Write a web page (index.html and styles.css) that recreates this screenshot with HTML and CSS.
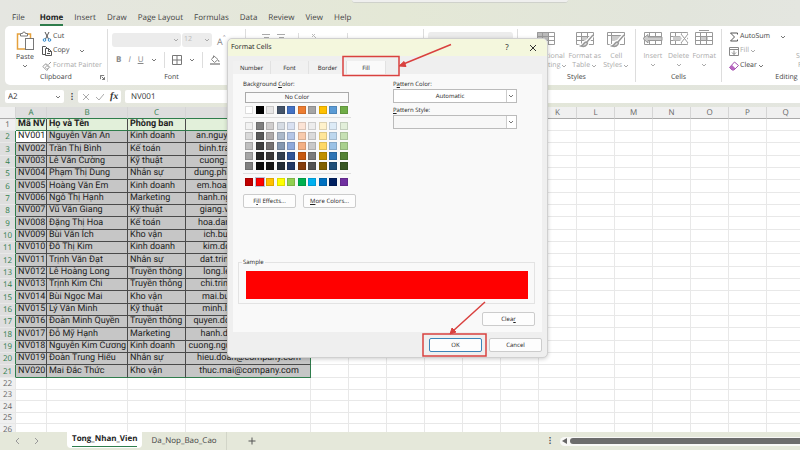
FILE: index.html
```html
<!DOCTYPE html>
<html lang="vi">
<head>
<meta charset="utf-8">
<meta name="viewport" content="width=device-width, initial-scale=1">
<title>Format Cells</title>
<link rel="stylesheet" href="styles.css">
</head>
<body>
<svg class="defs" aria-hidden="true">
  <symbol id="chev" viewBox="0 0 6 6"><path d="M1 2l2 2 2-2" fill="none" stroke="currentColor"/></symbol>
  <symbol id="grid" viewBox="0 0 20 18"><path d="M1.500 2.500h17v12h-17zM1.500 6.500h17M1.500 10.500h17M6.500 2.500v12M12.500 2.500v12" fill="none" stroke="currentColor"/></symbol>
  <symbol id="brush" viewBox="0 0 20 18"><path d="M17.500 5.500l-6 7M11 12c-2 0-2 3-5 4 3 1 6 0 6.500-3z" fill="#e3e3e3" stroke="#fff" stroke-width="4"/><path d="M18 5l-6 7M11 12c-2 0-2 3-5 4 3 1 6 0 6.500-3z" fill="#ddd" stroke="currentColor" stroke-width="1.500"/></symbol>
</svg>
<div class="app">
  <header class="top">
    <div class="search"></div>
    <nav class="tabs">
      <a href="#">File</a><a href="#" class="active">Home</a><a href="#">Insert</a><a href="#">Draw</a><a href="#">Page Layout</a><a href="#">Formulas</a><a href="#">Data</a><a href="#">Review</a><a href="#">View</a><a href="#">Help</a>
    </nav>
  </header>

  <section class="ribbon">
    <div class="group clipboard">
      <div class="body">
        <button class="big">
          <svg class="i-paste" viewBox="0 0 18 20"><path d="M4 3H1.500v15H9M11 3h3.500v4" fill="none" stroke="#e5a13c" stroke-width="1.500"/><path d="M4.500 5V2.500H6.500a1.500 1.500 0 0 1 3 0H11.500V5z" fill="#fff" stroke="#777"/><rect x="9.500" y="7.500" width="8" height="11" fill="#fff" stroke="#777"/></svg>
          Paste<svg class="chev"><use href="#chev"/></svg>
        </button>
        <div class="stack">
          <button><svg class="i10" viewBox="0 0 10 10"><path d="M3 0l3.500 7M7 0L3.500 7" fill="none" stroke="#555"/><circle cx="2.500" cy="8" r="1.300" fill="none" stroke="#2c86c9"/><circle cx="7.500" cy="8" r="1.300" fill="none" stroke="#2c86c9"/></svg>Cut</button>
          <button><svg class="i10" viewBox="0 0 10 10"><path d="M3 8.500H.5v-8h3l1.500 1.500M3.500 2.500h3l3 3v4h-6zM6.500 2.500v3h3M5 7.500h3" fill="none" stroke="#555"/></svg>Copy<svg class="chev far"><use href="#chev"/></svg></button>
          <button class="off"><svg class="i10" viewBox="0 0 10 10"><path d="M9 1L6.500 3.500M4 2.500l4 4M3.500 3L.8 5.500l4 4L7 6.500zM3 6.500l1.500-1M4.500 8l1-1" fill="none" stroke="#999"/></svg>Format Painter</button>
        </div>
      </div>
      <div class="label">Clipboard<svg class="launch" viewBox="0 0 6 6"><path d="M.5 5V.5H5M2 2l3 3M5.500 2.500v3h-3" fill="none" stroke="#555"/></svg></div>
    </div>
    <div class="group font">
      <div class="body col">
        <div class="line"><select class="fname" aria-label="Font name"><option></option></select><select class="fsize" aria-label="Font size"><option>12</option></select><span class="aa">A<sup>ˆ</sup></span></div>
        <div class="line tools"><button><b>B</b></button><button><i>I</i></button><button><u>U</u></button><svg class="chev"><use href="#chev"/></svg><span class="sep"></span>
          <svg class="i10" viewBox="0 0 10 10"><path d="M.5.5h9v9h-9zM.5 5h9M5 .5v9" fill="none" stroke="#777"/></svg><svg class="chev"><use href="#chev"/></svg><span class="sep"></span>
          <svg class="i10" viewBox="0 0 10 10"><path d="M4 1l4 3.500-3.500 3L1.500 4.500zM3.500 3V.5M8.500 5l.5 2" fill="none" stroke="#888"/><path d="M0 9h10" stroke="#aaa" stroke-width="2"/></svg><svg class="chev"><use href="#chev"/></svg><button><u>A</u></button></div>
      </div>
      <div class="label">Font</div>
    </div>
    <div class="group align"><div class="body"><svg class="i-lines" viewBox="0 0 24 10"><path d="M0 1.500h8M2 4.500h5M15 1.500h8M17 4.500h5" stroke="#aaa" fill="none"/></svg><span class="sep"></span><svg class="i-lines" viewBox="0 0 24 10"><path d="M1 1l7 7M1 4l3-3" stroke="#bbb" fill="none"/></svg><span class="sep"></span></div></div>
    <div class="group number"><div class="body"><select class="general" aria-label="Number format"><option></option></select></div></div>
    <div class="group styles">
      <div class="body">
        <button class="big off"><svg class="i20" viewBox="0 0 20 18"><path d="M1 2h12v8H1z" fill="#bbb"/><use href="#grid"/></svg>Conditional<span>Formatting<svg class="chev"><use href="#chev"/></svg></span></button>
        <button class="big off"><svg class="i20" viewBox="0 0 20 18"><path d="M6 6h7v5H6z" fill="#ccc"/><use href="#grid"/><use href="#brush"/></svg>Format as<span>Table<svg class="chev"><use href="#chev"/></svg></span></button>
        <button class="big off"><svg class="i20" viewBox="0 0 20 18"><path d="M1.500 2.500h17v12h-17zM1.500 5.500h17M5.500 2.500v12" fill="none" stroke="currentColor"/><path d="M6 6h9v5H6z" fill="#ccc"/><use href="#brush"/></svg>Cell<span>Styles<svg class="chev"><use href="#chev"/></svg></span></button>
      </div>
      <div class="label">Styles</div>
    </div>
    <div class="group cells">
      <div class="body">
        <button class="big off"><svg class="i20" viewBox="0 0 20 18"><use href="#grid"/><path d="M0 8.500l5-4v2.500h14v3.500H5v2.500z" fill="#ccc" stroke="currentColor"/></svg>Insert<svg class="chev"><use href="#chev"/></svg></button>
        <button class="big off"><svg class="i20" viewBox="0 0 20 18"><use href="#grid"/><path d="M4 6.500h9v4H4z" fill="#ccc"/><path d="M12 4l7 9M19 4l-7 9" stroke="#fff" stroke-width="4"/><path d="M12 4l7 9M19 4l-7 9" stroke="currentColor"/></svg>Delete<svg class="chev"><use href="#chev"/></svg></button>
        <button class="big off"><svg class="i20" viewBox="0 0 20 18"><path d="M6 6h8v5H6z" fill="#ccc"/><use href="#grid"/><path d="M5 .5h10" stroke="currentColor"/></svg>Format<svg class="chev"><use href="#chev"/></svg></button>
      </div>
      <div class="label">Cells</div>
    </div>
    <div class="group editing">
      <div class="body">
        <div class="stack">
          <button><svg class="i10" viewBox="0 0 10 10"><path d="M8.500 2.500V1H1.500L5.500 5 1.500 9h7V7.500" fill="none" stroke="#555"/></svg>AutoSum<svg class="chev far"><use href="#chev"/></svg></button>
          <button class="off"><svg class="i10" viewBox="0 0 10 10"><path d="M.5 1.500h9v8h-9zM.5 3.500h9M5 4.500v4M3 6.500l2 2 2-2" fill="none" stroke="#888"/></svg>Fill<svg class="chev"><use href="#chev"/></svg></button>
          <button><svg class="i10" viewBox="0 0 10 10"><path d="M5.500 1L9.500 4.500 5 9H3L.5 6.500z" fill="#fff" stroke="#a44fae"/><path d="M3 4l3.500 3.500L5 9H3L.5 6.500z" fill="#b765c0"/></svg>Clear<svg class="chev"><use href="#chev"/></svg></button>
        </div>
        <button class="big off sort"><span class="az">A<br>Z</span>Sort &amp;<span>Filter</span></button>
      </div>
      <div class="label">Editing</div>
    </div>
  </section>

  <section class="formula">
    <label class="namebox"><input value="A2" aria-label="Name box"><svg class="chev"><use href="#chev"/></svg></label>
    <span class="dots">⋮</span>
    <div class="fx"><svg viewBox="0 0 22 8"><path d="M1 1l6 6M7 1L1 7M14 4l3 3 5-6" fill="none" stroke="#aaa"/></svg><i>fx</i></div>
    <input class="value" value="NV001" aria-label="Formula bar">
  </section>

  <main class="sheet"><table id="sheet"></table></main>

  <footer class="bottom">
    <span class="nav"><svg viewBox="0 0 24 8"><path d="M4 1L1 4l3 3M20 1l3 3-3 3" fill="none" stroke="#999"/></svg></span>
    <a href="#" class="st active"><span>Tong_Nhan_Vien</span></a><a href="#" class="st">Da_Nop_Bao_Cao</a>
    <button class="add" aria-label="New sheet"><svg viewBox="0 0 8 8"><path d="M4 .5v7M.5 4h7" stroke="#555"/></svg></button>
    <span class="more">⋮</span>
    <div class="scroll"><svg viewBox="0 0 5 6"><path d="M5 0v6L0 3z" fill="#666"/></svg><div class="thumb"></div></div>
  </footer>

  <div class="dialog" role="dialog" aria-label="Format Cells">
    <div class="title"><span>Format Cells</span><button>?</button><button aria-label="Close"><svg viewBox="0 0 6 6"><path d="M0 0l6 6M6 0L0 6" stroke="#333"/></svg></button></div>
    <div class="dtabs"><button>Number</button><button>Font</button><button>Border</button><button class="on">Fill</button></div>
    <div class="panel">
      <div class="cols">
        <div class="left">
          <div class="lbl">Background <u>C</u>olor:</div>
          <button class="nocolor">No Color</button>
          <div id="palette"></div>
          <div class="pair"><button class="btn">F<u>i</u>ll Effects...</button><button class="btn"><u>M</u>ore Colors...</button></div>
        </div>
        <div class="right">
          <label class="lbl" for="pc">P<u>a</u>ttern Color:</label>
          <div class="combo"><select id="pc"><option>Automatic</option></select><span><svg class="chev"><use href="#chev"/></svg></span></div>
          <label class="lbl" for="ps"><u>P</u>attern Style:</label>
          <div class="combo empty"><select id="ps"><option></option></select><span><svg class="chev"><use href="#chev"/></svg></span></div>
        </div>
      </div>
      <fieldset><legend>Sample</legend><div class="red"></div></fieldset>
      <button class="btn clear">Clea<u>r</u></button>
    </div>
    <div class="actions"><button class="btn ok">OK</button><button class="btn">Cancel</button></div>
    <svg class="marks" viewBox="0 0 320 320" aria-hidden="true"><g fill="none" stroke="#d9413f" stroke-width="1.500"><path d="M116 18.500h56v19h-56zM196 296h63v22h-63zM224 6.500L174 27M258 264l-32 29"/></g><path d="M172 28l5-4.500 2 5zM223 296l2-6 4 4z" fill="#d9413f" stroke="#d9413f"/></svg>
  </div>
</div>
<script src="app.js"></script>
</body>
</html>
```
FILE: styles.css
```css
* { box-sizing: border-box; }
body { margin: 0; font-family: "Open Sans", "Noto Sans", sans-serif; font-size: 8px; line-height: 10px; color: #444; text-rendering: geometricPrecision; }
button, input, select { font: inherit; color: inherit; text-rendering: inherit; border: 0; background: none; padding: 0; margin: 0; appearance: none; }
a { color: inherit; text-decoration: none; }
svg { display: block; flex: none; }
.defs { position: absolute; width: 0; height: 0; }
.app { position: relative; height: 100vh; display: flex; flex-direction: column; overflow: hidden; background: linear-gradient(90deg, #e5e6e1, #e4e8d6 50%, #e2e5dc 85%, #e4e6e0); }
.chev { width: 6px; height: 6px; color: #777; }

.top { flex: none; height: 26px; }
.search { width: 27%; height: 3px; margin-left: 44%; background: #efefee; border-bottom: 1px solid #cfd1cb; border-radius: 0 0 3px 3px; }
.tabs { display: flex; gap: 11px; padding: 8px 12px 0; line-height: 14px; }
.tabs a:first-child { margin-right: 4px; }
.active { font-weight: 700; color: #222; border-bottom: 2px solid #2f7d4c; }
.tabs .active { line-height: 12px; padding-top: 1px; }

.ribbon { flex: none; display: flex; height: 59px; margin-left: 5px; padding: 3px 0; background: #fff; border-radius: 5px 0 0 5px; overflow: hidden; }
.group { flex: none; display: flex; flex-direction: column; border-right: 1px solid #ddd; font-size: 7px; }
.body { flex: 1; display: flex; min-height: 0; }
.label { position: relative; height: 9px; line-height: 9px; text-align: center; }
.launch { position: absolute; right: 2px; top: 2px; width: 5px; height: 5px; }
.clipboard { width: 103px; }
.font { width: 138px; }
.align { width: 178px; }
.number { width: 94px; }
.styles { width: 118px; }
.cells { width: 86px; }
.editing { width: 130px; }
.big { display: flex; flex-direction: column; align-items: center; line-height: 9px; font-size: 7px; }
.big > span { display: flex; align-items: center; gap: 1px; }
.off { color: #aaa; }
.off .chev { color: #aaa; }
.stack { display: flex; flex-direction: column; padding-top: 1px; }
.stack button { display: flex; align-items: center; gap: 1px; height: 15px; white-space: nowrap; }
.far { margin-left: 9px; }
.i10 { width: 10px; height: 10px; }
.i20 { width: 20px; height: 18px; color: #999; }
.clipboard .big { width: 34px; margin-left: 3px; padding-top: 2px; }
.clipboard .big .chev { margin-top: 1px; }
.i-paste { width: 18px; height: 20px; margin-bottom: 2px; }
.font .body { flex-direction: column; gap: 5px; padding: 4px 0 0 4px; color: #888; }
.font .label { padding-right: 10px; }
.line { display: flex; align-items: center; gap: 1px; height: 14px; }
.fname, .fsize, .general { background: #ececec url("data:image/svg+xml,%3Csvg xmlns='http://www.w3.org/2000/svg' width='6' height='6'%3E%3Cpath d='M1 2l2 2 2-2' fill='none' stroke='%23aaa'/%3E%3C/svg%3E") no-repeat right 2px center; height: 14px; border-radius: 3px; color: #bbb; }
.fname { width: 69px; }
.fsize { width: 30px; padding-left: 2px; }
.aa { margin-left: 4px; font-size: 9px; }
.tools { justify-content: space-between; padding: 0 0 0 4px; font-size: 8px; height: 16px; }
.sep { width: 1px; align-self: stretch; background: #ddd; }
.align .body { gap: 12px; padding: 4px 16px 0; color: #aaa; }
.i-lines { width: 24px; height: 10px; }
.general { width: 86px; margin: 3px 4px; padding-left: 3px; align-self: flex-start; }
.styles .body { padding: 1px 5px 0 7px; }
.styles .big { width: 36px; }
.styles .big:first-child { width: 42px; }
.styles .big:last-child { width: 28px; }
.cells .big { flex: 1; }
.cells .body { padding: 1px 4px 0; }
.cells .big .chev { margin-top: 1px; }
.styles .i20, .cells .i20 { margin-bottom: 4px; }
.editing .body { padding-left: 7px; gap: 10px; }
.az { font-size: 9px; line-height: 9px; margin-bottom: 3px; }
.sort { padding-top: 2px; }

.formula { flex: none; display: flex; gap: 4px; height: 13px; margin: 5px 0 4px 5px; color: #333; }
.namebox { display: flex; align-items: center; width: 59px; background: #fff; border-radius: 2px; padding: 0 3px; }
.namebox input { flex: 1; min-width: 0; }
.dots { width: 6px; text-align: center; line-height: 13px; font-weight: 700; }
.fx { display: flex; align-items: center; gap: 6px; width: 43px; padding-left: 4px; background: #fff; border-radius: 2px; }
.fx svg { width: 22px; height: 8px; }
.fx i { font: italic 700 10px "Liberation Serif", serif; }
.value { flex: 1; background: #fff; padding-left: 6px; border-radius: 2px 0 0 2px; }

.sheet { flex: 1; min-height: 0; overflow: hidden; background: #fff; }
.sheet table { table-layout: fixed; width: 1071px; border-collapse: separate; border-spacing: 0; font-family: Roboto, "Noto Sans", sans-serif; font-size: 9px; line-height: 11px; color: #222; }
.sheet th, .sheet td { padding: 0; height: 12px; border-right: 1px solid #e8e8e8; border-bottom: 1px solid #e8e8e8; white-space: nowrap; }
.sheet th { font-family: "Open Sans", sans-serif; font-weight: 400; background: #f0f0f0; color: #666; font-size: 8px; }
.sheet thead th.selected { background: #dedede; color: #2f7d4c; border-bottom-color: #2f7d4c; }
.sheet thead th { border-right-color: #d5d5d5; border-bottom-color: #aaa; }
.rownum { width: 16px; }
.ca { width: 31px; } .cb { width: 81px; } .cc { width: 58px; } .cd { width: 125px; } .cx { width: 38px; }
.sheet tr.tall > * { height: 13px; }
.sheet tr.short > * { height: 11px; line-height: 10px; }
.sheet tr.data th { background: #dedede; color: #2f7d4c; border-right-color: #2f7d4c; }
.sheet tr.head .f { background: #e2f0da; font-weight: 700; border-bottom-color: #2f7d4c; }
.sheet .f { padding-left: 2px; border-color: #4a4a4a; }
.sheet tr.data .f { background: #c6c6c6; }
.sheet tr.data .f.cur { background: #fff; }
.sheet .f.mail { text-align: center; border-right-color: #2f7d4c; }
.sheet tr.last .f { border-bottom-color: #2f7d4c; }

.bottom { flex: none; display: flex; height: 18px; background: #e5e8da; align-items: center; }
.nav { width: 67px; padding-left: 15px; }
.nav svg { width: 24px; height: 8px; }
.st { font-size: 8px; line-height: 18px; padding: 0 9px; border-right: 1px solid #d2d5c8; }
.st.active { background: #fff; padding: 0 5px; border: 0; height: 16px; align-self: flex-start; border-radius: 0 0 4px 4px; }
.st.active span { display: block; line-height: 14px; border-bottom: 1px solid #2f7d4c; }
.add { margin-left: 21px; }
.add svg { width: 8px; height: 8px; }
.more { margin-left: auto; width: 14px; font-weight: 700; }
.scroll { display: flex; align-items: center; gap: 3px; width: 30%; height: 9px; padding-left: 2px; background: #f8f8f6; border-radius: 5px 0 0 5px; }
.scroll svg { width: 5px; height: 6px; }
.thumb { flex: 1; height: 6px; background: #6c6c6c; border-radius: 3px 0 0 3px; }

.dialog { position: absolute; left: 227px; top: 38px; width: 321px; padding: 0 5px 5px; background: #efefef; border: 1px solid #d0d0d0; border-radius: 5px; box-shadow: 0 1px 4px #0003; font-size: 6px; line-height: 8px; color: #222; }
.title { display: flex; align-items: center; height: 17px; margin: 0 -5px 5px; padding: 0 9px 0 3px; background: #f4f7dd; border-radius: 5px 5px 0 0; font-size: 7px; }
.title span { flex: 1; }
.title button { width: 8px; margin-left: 19px; font-size: 8px; }
.title svg { width: 6px; height: 6px; }
.dtabs { display: flex; height: 13px; }
.dtabs button { width: 38px; background: #f1f1f1; border-right: 1px solid #e2e2e2; }
.dtabs .on { width: 39px; background: #fafafa; }
.panel { display: flex; flex-direction: column; background: #f9f9f9; padding: 6px 7px 6px 5px; height: 258px; }
.cols { display: flex; gap: 37px; padding-left: 5px; }
.left { width: 113px; }
.right { width: 124px; }
.lbl { display: block; height: 9px; }
.nocolor { width: 104px; height: 11px; margin: 3px 0 3px 2px; line-height: 9px; border: 1px solid #aaa; background: #fafafa; }
.sw { display: grid; grid-template-columns: repeat(10, 1fr); width: 105px; margin-left: 2px; row-gap: 2px; }
.sw i { width: 8px; height: 8px; border: 1px solid #0002; }
.sw i.picked { outline: 1px solid #b9c3d8; }
#palette hr { width: 108px; margin: 3px 0 4px; border: 0; border-top: 1px solid #ddd; }
.pair { display: flex; gap: 7px; margin-top: 8px; }
.btn { flex: none; width: 53px; height: 14px; background: #fdfdfd; border: 1px solid #ccc; border-radius: 2px; }
.combo { display: flex; height: 14px; margin: 0 0 3px; border: 1px solid #bbb; background: #fff; }
.combo.empty { background: #f7f7f7; }
.combo select { flex: 1; text-align-last: center; }
.combo span { width: 10px; padding: 3px 1px; border-left: 1px solid #ccc; background: #fff; }
fieldset { margin: auto 0 8px; padding: 5px 6px 4px 7px; border: 1px solid #e3e3e3; min-width: 0; }
legend { padding: 0 1px; margin-left: -4px; }
.red { height: 28px; background: #f00; }
.clear { align-self: flex-end; }
.actions { display: flex; justify-content: flex-end; gap: 7px; padding-top: 6px; }
.ok { border-color: #3c84b8; }
.marks { position: absolute; left: -1px; top: -1px; width: 320px; height: 320px; pointer-events: none; }
```
FILE: app.js
```js
const people = [
  ['Nguyễn Văn An', 'Kinh doanh', 'an.nguyen'], ['Trần Thị Bình', 'Kế toán', 'binh.tran'],
  ['Lê Văn Cường', 'Kỹ thuật', 'cuong.le'], ['Phạm Thị Dung', 'Nhân sự', 'dung.pham'],
  ['Hoàng Văn Em', 'Kinh doanh', 'em.hoang'], ['Ngô Thị Hạnh', 'Marketing', 'hanh.ngo'],
  ['Vũ Văn Giang', 'Kỹ thuật', 'giang.vu'], ['Đặng Thị Hoa', 'Kế toán', 'hoa.dang'],
  ['Bùi Văn Ích', 'Kho vận', 'ich.bui'], ['Đỗ Thị Kim', 'Kinh doanh', 'kim.do'],
  ['Trịnh Văn Đạt', 'Nhân sự', 'dat.trinh'], ['Lê Hoàng Long', 'Truyền thông', 'long.le'],
  ['Trịnh Kim Chi', 'Truyền thông', 'chi.trinh'], ['Bùi Ngọc Mai', 'Kho vận', 'mai.bui'],
  ['Lý Văn Minh', 'Kỹ thuật', 'minh.ly'], ['Đoàn Minh Quyền', 'Truyền thông', 'quyen.doan'],
  ['Đỗ Mỹ Hạnh', 'Marketing', 'hanh.do'], ['Nguyễn Kim Cương', 'Kinh doanh', 'cuong.nguyen'],
  ['Đoàn Trung Hiếu', 'Nhân sự', 'hieu.doan'], ['Mai Đắc Thức', 'Kho vận', 'thuc.mai']
];
const letters = 'ABCDEFGHIJKLMNOPQRSTUVWX'.split('');
const widths = ['ca', 'cb', 'cc', 'cd'];
const blanks = '<td></td>'.repeat(20);
let html = '<colgroup><col class="rownum">' + letters.map((l, i) => `<col class="${widths[i] || 'cx'}">`).join('') + '</colgroup>';
html += '<thead><tr><th></th>' + letters.map((l, i) => `<th class="${i < 4 ? 'selected' : ''}">${l}</th>`).join('') + '</tr></thead><tbody>';
for (let r = 1; r <= 60; r++) {
  let cls = '', cells;
  if (r <= 21) {
    if (r % 3 === 0) cls = 'tall ';
    const p = people[r - 2];
    cls += r === 1 ? 'head' : r === 21 ? 'data last' : 'data';
    const v = r === 1 ? ['Mã NV', 'Họ và Tên', 'Phòng ban', 'Email']
      : ['NV' + String(r - 1).padStart(3, '0'), p[0], p[1], p[2] + '@company.com'];
    cells = v.map((t, i) => `<td class="f${i === 3 ? ' mail' : ''}${r === 2 && i === 0 ? ' cur' : ''}">${t}</td>`).join('');
  } else {
    cls = r % 2 ? 'short' : '';
    cells = '<td></td>'.repeat(4);
  }
  html += `<tr class="${cls}"><th>${r}</th>${cells}${blanks}</tr>`;
}
document.getElementById('sheet').innerHTML = html + '</tbody>';

const row = (list) => '<div class="sw">' + list.split(' ').map((c) =>
  `<i style="background:#${c}"${c === 'ff0000' ? ' class="picked"' : ''}></i>`).join('') + '</div>';
document.getElementById('palette').innerHTML =
  row('ffffff 000000 e7e6e6 44546a 4472c4 ed7d31 a5a5a5 ffc000 5b9bd5 70ad47') + '<hr>' +
  row('f2f2f2 7f7f7f d0cece d6dce4 d9e1f2 fce4d6 ededed fff2cc ddebf7 e2efda ' +
      'd9d9d9 595959 aeaaaa acb9ca b4c6e7 f8cbad dbdbdb ffe699 bdd7ee c6e0b4 ' +
      'bfbfbf 404040 757171 8497b0 8ea9db f4b084 c9c9c9 ffd966 9bc2e6 a9d08e ' +
      'a6a6a6 262626 3a3838 333f4f 305496 c65911 7b7b7b bf8f00 2f75b5 548235 ' +
      '808080 0d0d0d 161616 222b35 203764 833c0c 525252 806000 1f4e78 375623') + '<hr>' +
  row('c00000 ff0000 ffc000 ffff00 92d050 00b050 00b0f0 0070c0 002060 7030a0');
```
